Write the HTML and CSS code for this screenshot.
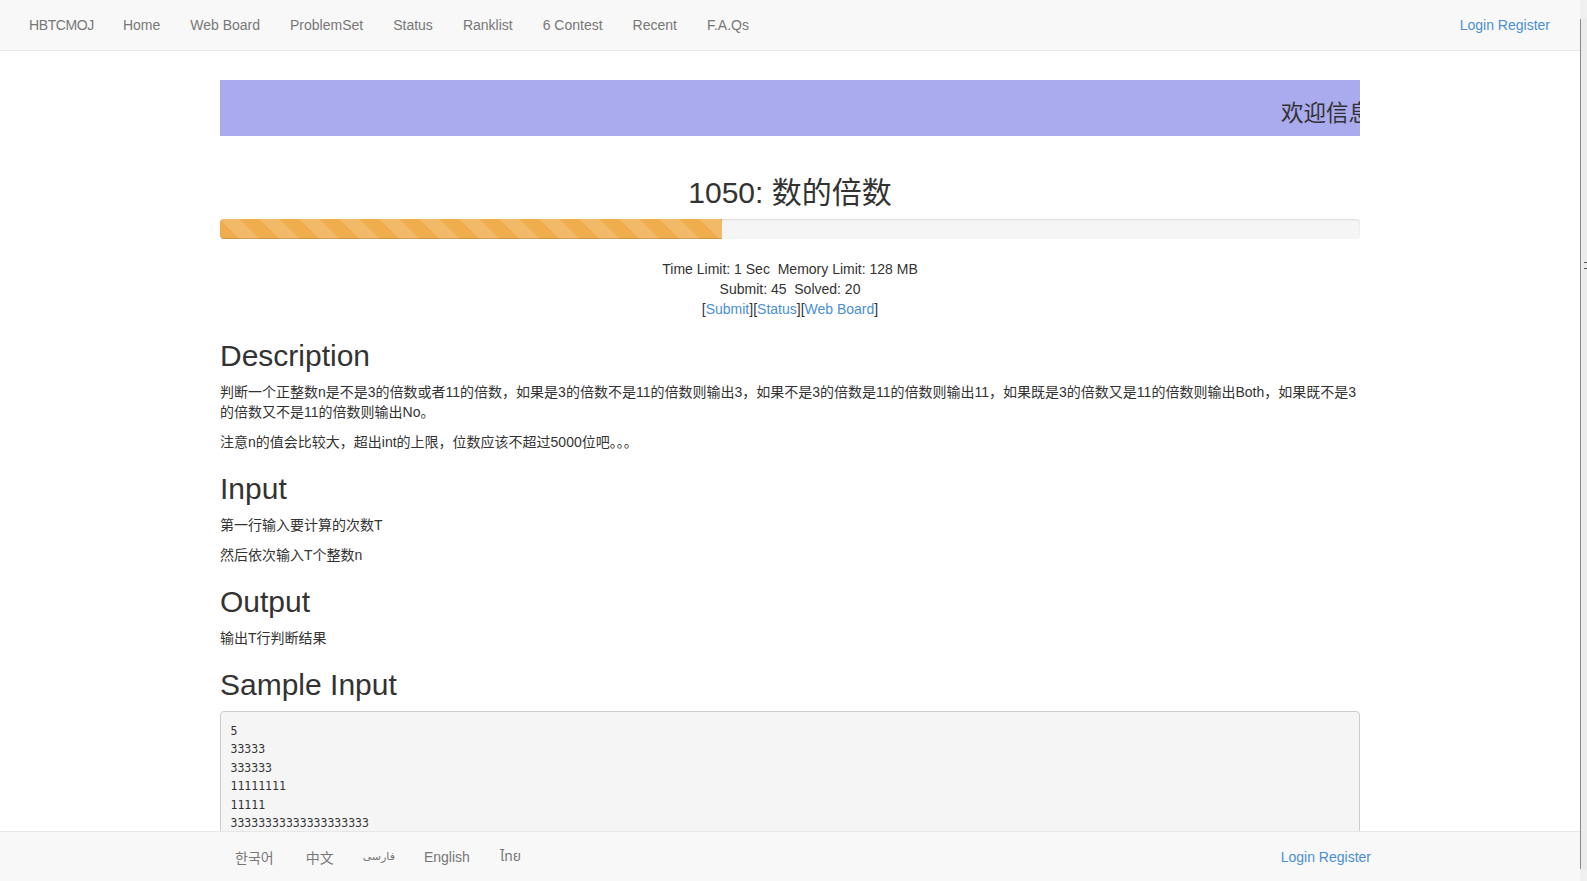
FILE: index.html
```html
<!DOCTYPE html>
<html lang="zh-CN">
<head>
<meta charset="utf-8">
<title>1050: 数的倍数 - HBTCMOJ</title>
<link rel="stylesheet" href="styles.css">
</head>
<body>
<div class="window">
  <div class="page">
    <nav class="topbar">
      <ul class="nav">
        <li><a class="brand" href="#">HBTCMOJ</a></li>
        <li><a href="#">Home</a></li>
        <li><a href="#">Web Board</a></li>
        <li><a href="#">ProblemSet</a></li>
        <li><a href="#">Status</a></li>
        <li><a href="#">Ranklist</a></li>
        <li><a href="#">6 Contest</a></li>
        <li><a href="#">Recent</a></li>
        <li><a href="#">F.A.Qs</a></li>
      </ul>
      <ul class="nav">
        <li class="auth"><a class="link" href="#">Login</a> <a class="link" href="#">Register</a></li>
      </ul>
    </nav>

    <main class="main">
      <div class="container">
        <div class="banner"><span class="marquee-text">欢迎信息学奥赛的同学们来到HBTCMOJ</span></div>

        <h2 class="title">1050: 数的倍数</h2>
        <div class="progress"><div class="progress-bar" style="width: 44%"></div></div>

        <div class="info">
          <div>Time Limit: 1 Sec&nbsp;&nbsp;Memory Limit: 128 MB</div>
          <div>Submit: 45&nbsp;&nbsp;Solved: 20</div>
          <div>[<a class="link" href="#">Submit</a>][<a class="link" href="#">Status</a>][<a class="link" href="#">Web Board</a>]</div>
        </div>

        <h2 class="section-title">Description</h2>
        <div class="content">
          <p>判断一个正整数n是不是3的倍数或者11的倍数，如果是3的倍数不是11的倍数则输出3，如果不是3的倍数是11的倍数则输出11，如果既是3的倍数又是11的倍数则输出Both，如果既不是3<br>的倍数又不是11的倍数则输出No。</p>
          <p>注意n的值会比较大，超出int的上限，位数应该不超过5000位吧。。。</p>
        </div>

        <h2 class="section-title">Input</h2>
        <div class="content">
          <p>第一行输入要计算的次数T</p>
          <p>然后依次输入T个整数n</p>
        </div>

        <h2 class="section-title">Output</h2>
        <div class="content">
          <p>输出T行判断结果</p>
        </div>

        <h2 class="section-title">Sample Input</h2>
        <pre class="sample">5
33333
333333
11111111
11111
33333333333333333333
</pre>
      </div>
    </main>

    <footer class="bottombar">
      <div class="footer-inner">
        <ul class="nav">
          <li><a class="ko" href="#">한국어</a></li>
          <li><a class="zh" href="#">中文</a></li>
          <li><a class="fa" href="#">فارسی</a></li>
          <li><a href="#">English</a></li>
          <li><a class="th" href="#">ไทย</a></li>
        </ul>
        <ul class="nav nav-right">
          <li class="auth"><a class="link" href="#">Login</a> <a class="link" href="#">Register</a></li>
        </ul>
      </div>
    </footer>
  </div>
  <div class="scrollbar"><div class="thumb"><span class="grip"></span></div></div>
</div>
</body>
</html>
```

FILE: styles.css
```css
* { box-sizing: border-box; }

html, body {
  margin: 0;
  padding: 0;
  overflow: hidden;
}

body {
  font-family: "Liberation Sans", Arial, "Noto Sans CJK SC", sans-serif;
  font-size: 14px;
  line-height: 20px;
  color: #333;
  background: #fff;
}

.window {
  display: flex;
  width: 1587px;
  height: 881px;
  overflow: hidden;
}

.page {
  flex: 1;
  min-width: 0;
  display: flex;
  flex-direction: column;
}

/* top navbar */
.topbar {
  flex-shrink: 0;
  height: 51px;
  background: #f8f8f8;
  border-bottom: 1px solid #e7e7e7;
  display: flex;
  justify-content: space-between;
  padding: 0 15px 0 14px;
}

.nav {
  display: flex;
  list-style: none;
  margin: 0;
  padding: 0;
}

.nav a {
  display: block;
  padding: 15px;
  line-height: 20px;
  color: #777;
  text-decoration: none;
}

.nav a.brand {
  letter-spacing: -0.4px;
  padding-right: 14px;
}

.nav .auth {
  padding: 15px;
  line-height: 20px;
}

.nav .auth a {
  display: inline;
  padding: 0;
}

.link, .nav .auth a.link {
  color: #4a8fd6;
  text-decoration: none;
}

/* main area */
.main {
  flex: 1;
  min-height: 0;
  overflow: hidden;
}

.container {
  width: 1140px;
  margin: 0 auto;
  padding-top: 29px;
}

.banner {
  height: 56px;
  background: #aaaaee;
  overflow: hidden;
  white-space: nowrap;
  display: flex;
  align-items: center;
  padding-top: 5px;
  margin-bottom: 40px;
  font-family: "Noto Sans CJK SC", sans-serif;
  font-size: 22.5px;
  color: #333;
}

.marquee-text {
  margin-left: 1061px;
  flex-shrink: 0;
}

.title, .section-title {
  font-size: 30px;
  line-height: 33px;
  font-weight: normal;
  margin: 20px 0 10px;
  color: #333;
}

.title {
  text-align: center;
}

.progress {
  height: 20px;
  margin-bottom: 20px;
  background: #f5f5f5;
  border-radius: 4px;
  box-shadow: inset 0 1px 2px rgba(0, 0, 0, 0.1);
  overflow: hidden;
}

.progress-bar {
  height: 100%;
  background-color: #f0ad4e;
  background-image: linear-gradient(45deg,
    rgba(255, 255, 255, 0.15) 25%, transparent 25%,
    transparent 50%, rgba(255, 255, 255, 0.15) 50%,
    rgba(255, 255, 255, 0.15) 75%, transparent 75%, transparent);
  background-size: 40px 40px;
  box-shadow: inset 0 -1px 0 rgba(0, 0, 0, 0.15);
}

.info {
  text-align: center;
}

.content p {
  margin: 0 0 10px;
}

.sample {
  margin: 0 0 10px;
  padding: 9.5px;
  border: 1px solid #ccc;
  border-radius: 4px;
  background: #f5f5f5;
  font-family: "DejaVu Sans Mono", monospace;
  font-size: 11.5px;
  line-height: 18.57px;
  color: #333;
  white-space: pre;
}

/* footer */
.bottombar {
  flex-shrink: 0;
  height: 50px;
  background: #f8f8f8;
  border-top: 1px solid #e7e7e7;
}

.footer-inner {
  width: 1140px;
  margin: 0 auto;
  display: flex;
  justify-content: space-between;
}

.nav-right {
  margin-right: -26px;
}

.ko { font-family: "Noto Sans CJK KR", sans-serif; }
.zh { font-family: "Noto Sans CJK SC", sans-serif; }
.fa { font-family: "DejaVu Sans", sans-serif; font-size: 11px; }
.th { font-family: "Noto Sans Thai", "DejaVu Sans", sans-serif; }

.bottombar .ko { padding-right: 17px; }
.bottombar .zh { padding-right: 14px; }
.bottombar .fa { padding-right: 14px; }

/* scrollbar strip */
.scrollbar {
  width: 7px;
  flex-shrink: 0;
  background: #f0f0f0;
  padding-top: 19px;
}

.thumb {
  height: 850px;
  border-left: 1px solid #8a8a8a;
  background: #ececec;
  position: relative;
}

.grip {
  position: absolute;
  left: 3px;
  top: 243px;
  width: 2px;
  height: 7px;
  border-top: 1px dotted #555;
  border-bottom: 1px dotted #555;
}
```
